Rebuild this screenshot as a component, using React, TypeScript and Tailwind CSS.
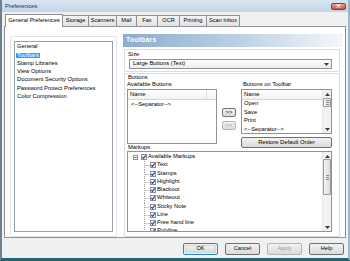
import React from 'react';

const tabs = ['General Preferences', 'Storage', 'Scanners', 'Mail', 'Fax', 'OCR', 'Printing', 'Scan Inbox'];
const tabWidths = ['w-[58px]', 'w-[27px]', 'w-[29px]', 'w-[21px]', 'w-[22px]', 'w-[23px]', 'w-[28px]', 'w-[34px]'];
const pages = ['General', 'Toolbars', 'Stamp Libraries', 'View Options', 'Document Security Options', 'Password Protect Preferences', 'Color Compression'];
const markups = ['Text', 'Stamps', 'Highlight', 'Blackout', 'Whiteout', 'Sticky Note', 'Line', 'Free hand line', 'Polyline'];

function Check() {
  return (
    <svg width="6" height="6" viewBox="0 0 6 6" className="shrink-0">
      <rect x="0.5" y="0.5" width="5" height="5" fill="#f4f4f4" stroke="#8e8f8f" />
      <path d="M1.3 3.1 L2.5 4.4 L4.8 1.3" fill="none" stroke="#1f3fa8" strokeWidth="1.1" />
    </svg>
  );
}

function Arrow({ up }: { up?: boolean }) {
  return (
    <svg width="5" height="3" viewBox="0 0 5 3">
      <path d={up ? 'M0 3 L2.5 0 L5 3 Z' : 'M0 0 L2.5 3 L5 0 Z'} fill="#3c3c3c" />
    </svg>
  );
}

function Scrollbar({ thumb }: { thumb: string }) {
  return (
    <div className="w-[9px] h-full shrink-0 bg-[#f1f1f1] border-l border-[#e6e6e6] flex flex-col items-center">
      <div className="h-[8px] flex items-center justify-center">
        <Arrow up />
      </div>
      <div className={`${thumb} w-[8px] rounded-[1px] border border-[#9a9a9a] bg-gradient-to-r from-[#f4f4f4] to-[#dcdcdc] flex flex-col items-center justify-center gap-[1px]`}>
        <div className="w-[3px] h-px bg-[#8a8a8a]" />
        <div className="w-[3px] h-px bg-[#8a8a8a]" />
        <div className="w-[3px] h-px bg-[#8a8a8a]" />
      </div>
      <div className="flex-1" />
      <div className="h-[8px] flex items-center justify-center">
        <Arrow />
      </div>
    </div>
  );
}

function Btn({ label, className = '', disabled = false }: { label: string; className?: string; disabled?: boolean }) {
  return (
    <div className={`${className} flex items-center justify-center rounded-[2px] border bg-gradient-to-b from-[#f2f2f2] to-[#dadada] ${disabled ? 'text-[#9a9a9a] border-[#b5b5b5]' : 'border-[#707070]'}`}>
      {label}
    </div>
  );
}

export default function App() {
  return (
    <div className="w-[350px] h-[261px] flex flex-col bg-[#f0f0f0] font-['Liberation_Sans',Arial,sans-serif] text-[5.8px] leading-none text-black overflow-hidden">
      {/* Title bar */}
      <div className="h-[12px] shrink-0 flex items-center justify-between pl-[3px] pr-[2px] bg-gradient-to-b from-[#d9e6f1] to-[#c3d5e6] border-l-2 border-r-2 border-l-[#6f7f8b] border-r-[#9ab9cf]">
        <span className="text-[6px] text-[#26323d]">Preferences</span>
        <div className="w-[15px] h-[7px] rounded-[2px] border border-[#8b3b2c] bg-gradient-to-b from-[#eba893] to-[#c8503a] flex items-center justify-center">
          <svg width="5" height="4" viewBox="0 0 5 4">
            <path d="M0.5 0.5 L4.5 3.5 M4.5 0.5 L0.5 3.5" stroke="#fff" strokeWidth="1.1" />
          </svg>
        </div>
      </div>

      {/* Window body */}
      <div className="flex-1 flex flex-col border-l-2 border-r-2 border-b-[3px] border-l-[#6f7f8b] border-r-[#9ab9cf] border-b-[#1e6676]">
        {/* Tabs */}
        <div className="h-[13px] mt-[1px] pl-[3px] flex items-end shrink-0">
          {tabs.map((t, i) => (
            <div
              key={t}
              className={`${tabWidths[i]} flex items-center justify-center border border-b-0 border-[#8e9198] text-[5.6px] ${
                i === 0 ? 'h-[13px] bg-white relative z-10 -mb-px' : 'h-[11px] bg-gradient-to-b from-[#f4f4f4] to-[#e2e2e2] -ml-px'
              }`}
            >
              {t}
            </div>
          ))}
        </div>

        {/* Tab panel */}
        <div className="mx-[2px] h-[212px] shrink-0 border border-[#8e9198] bg-white flex pt-[7px]">
          {/* Left list */}
          <div className="ml-[5px] mt-[2px] w-[107px] h-[201px] border border-[#dde3e8] rounded-[2px] pl-[3px] pt-[4px]">
            <div className="w-[99px] h-[191px] border border-[#9aa0a8] bg-white pt-[1px] pl-[1px]">
              {pages.map((p, i) => (
                <div key={p} className="h-[8.3px] flex items-center">
                  <span className={`px-[1px] ${i === 1 ? 'bg-[#3399ff] text-white' : ''}`}>{p}</span>
                </div>
              ))}
            </div>
          </div>

          {/* Right side */}
          <div className="ml-[6px] w-[220px] flex flex-col">
            <div className="h-[13px] bg-gradient-to-r from-[#8badcf] via-[#b9cfe3] to-[#f4f7fa] flex items-center pl-[3px]">
              <span className="text-[6.8px] font-bold text-white tracking-[0.3px]">Toolbars</span>
            </div>

            {/* Size group */}
            <div className="ml-[1px] mt-[2px] w-[216px] h-[23px] border border-[#dcdcdc] rounded-[2px] pl-[3px] pt-[1px]">
              <div className="h-[8px] flex items-center">Size</div>
              <div className="ml-[1px] w-[203px] h-[10px] border border-[#8f9399] bg-gradient-to-b from-[#ffffff] to-[#ececec] flex items-center justify-between pl-[3px] pr-[2px]">
                <span>Large Buttons (Text)</span>
                <Arrow />
              </div>
            </div>

            {/* Buttons + Markups group */}
            <div className="ml-[1px] mt-[1px] w-[216px] h-[164px] border border-[#dcdcdc] rounded-[2px] pl-[2px]">
              <div className="h-[7px] pl-[1px] flex items-center">Buttons</div>
              <div className="flex items-start">
                <div className="w-[90px]">
                  <div className="h-[7px] flex items-center">Available Buttons</div>
                  <div className="mt-[1px] h-[55px] border border-[#8f9399] bg-white">
                    <div className="h-[10px] flex border-b border-[#d5d5d5] bg-gradient-to-b from-white to-[#f2f2f2]">
                      <div className="w-[79px] pl-[2px] flex items-center border-r border-[#dcdcdc]">Name</div>
                    </div>
                    <div className="h-[9px] pl-[3px] flex items-center">&lt;--Separator--&gt;</div>
                  </div>
                </div>
                <div className="w-[24px] flex flex-col items-center pt-[27px] gap-[4px]">
                  <Btn label=">>" className="w-[14px] h-[9px]" />
                  <Btn label="<<" className="w-[14px] h-[9px]" disabled />
                </div>
                <div className="w-[91px]">
                  <div className="h-[7px] pl-[2px] flex items-center">Buttons on Toolbar</div>
                  <div className="mt-[1px] h-[45px] border border-[#8f9399] bg-white flex">
                    <div className="flex-1">
                      <div className="h-[10px] flex items-center pl-[2px] border-b border-[#d5d5d5] bg-gradient-to-b from-white to-[#f2f2f2]">Name</div>
                      {['Open', 'Save', 'Print', '<--Separator-->'].map((b) => (
                        <div key={b} className="h-[8.5px] pl-[2px] flex items-center">{b}</div>
                      ))}
                    </div>
                    <Scrollbar thumb="h-[9px]" />
                  </div>
                  <Btn label="Restore Default Order" className="mt-[3px] w-[91px] h-[11px]" />
                </div>
              </div>

              <div className="-mt-[4px] h-[7px] pl-[1px] flex items-center">Markups</div>
              <div className="w-[205px] h-[81px] border border-[#8f9399] bg-white flex">
                <div className="flex-1 pt-[1px] overflow-hidden">
                  <div className="h-[8.25px] flex items-center pl-[5px]">
                    <svg width="5" height="5" viewBox="0 0 5 5" className="shrink-0">
                      <rect x="0.5" y="0.5" width="4" height="4" fill="#fff" stroke="#8e8f8f" />
                      <path d="M1.5 2.5 H3.5" stroke="#333" strokeWidth="0.8" />
                    </svg>
                    <div className="ml-[3px]">
                      <Check />
                    </div>
                    <span className="ml-[1px]">Available Markups</span>
                  </div>
                  {markups.map((m) => (
                    <div key={m} className="h-[8.25px] flex items-center pl-[16px]">
                      <svg width="6" height="9" viewBox="0 0 6 9" className="shrink-0 self-stretch">
                        <path d="M0.5 0 V9 M0.5 4.5 H6" stroke="#a0a0a0" strokeWidth="1" strokeDasharray="1 1" />
                      </svg>
                      <Check />
                      <span className="ml-[1px]">{m}</span>
                    </div>
                  ))}
                </div>
                <Scrollbar thumb="h-[36px] mt-[-1px]" />
              </div>
            </div>
          </div>
        </div>

        {/* Dialog buttons */}
        <div className="mt-[5px] h-[12px] flex justify-end gap-[7px] pr-[4px] text-[5.6px]">
          <div className="w-[35px] h-[12px] rounded-[2px] border border-[#3c7fb1] p-px">
            <div className="w-full h-full rounded-[1px] border border-[#b9dcf3] bg-gradient-to-b from-[#f2f2f2] to-[#dadada] flex items-center justify-center">OK</div>
          </div>
          <Btn label="Cancel" className="w-[35px] h-[12px]" />
          <Btn label="Apply" className="w-[35px] h-[12px]" disabled />
          <Btn label="Help" className="w-[35px] h-[12px]" />
        </div>
      </div>
    </div>
  );
}
